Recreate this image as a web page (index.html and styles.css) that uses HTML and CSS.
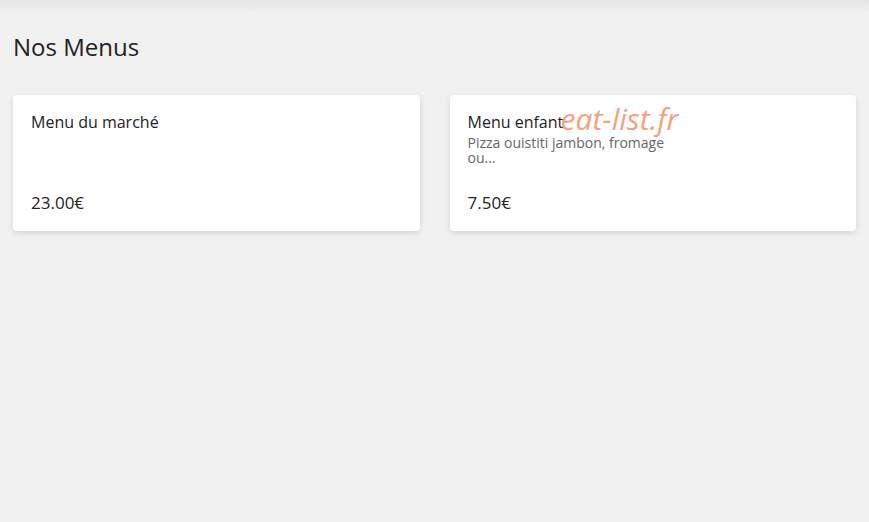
FILE: index.html
```html
<!DOCTYPE html>
<html lang="fr">
<head>
<meta charset="utf-8">
<title>Nos Menus</title>
<link rel="stylesheet" href="styles.css">
</head>
<body>
<div class="topbar"></div>
<main class="page">
  <h1 class="page-title">Nos Menus</h1>
  <section class="menu-grid">
    <article class="menu-card">
      <h2 class="menu-name">Menu du marché</h2>
      <div class="menu-price">23.00€</div>
    </article>
    <article class="menu-card">
      <h2 class="menu-name">Menu enfant</h2>
      <p class="menu-desc">Pizza ouistiti jambon, fromage ou...</p>
      <div class="menu-price">7.50€</div>
      <span class="brand-mark">eat-list.fr</span>
    </article>
  </section>
</main>
</body>
</html>
```

FILE: styles.css
```css
html, body {
  margin: 0;
  padding: 0;
}

body {
  background: #f1f1f1;
  font-family: "Open Sans", "Liberation Sans", sans-serif;
  color: #222;
  min-height: 522px;
}

.topbar {
  height: 12px;
  background: linear-gradient(to bottom, #e4e4e4, #f1f1f1);
}

.page {
  padding: 0 13px;
}

.page-title {
  margin: 19px 0 0;
  font-size: 24px;
  font-weight: 400;
  line-height: 32px;
  color: #222;
}

.menu-grid {
  display: grid;
  grid-template-columns: 1fr 1fr;
  gap: 30px;
  margin-top: 32px;
}

.menu-card {
  position: relative;
  background: #fff;
  border-radius: 4px;
  box-shadow: 0 2px 6px rgba(0, 0, 0, 0.12);
  height: 136px;
  box-sizing: border-box;
  padding: 15px 18px 16px;
  display: flex;
  flex-direction: column;
}

.menu-name {
  margin: 0;
  font-size: 16px;
  font-weight: 400;
  line-height: 24px;
  color: #222;
}

.menu-desc {
  margin: 1px 0 0;
  width: 210px;
  font-size: 14px;
  line-height: 15px;
  color: #666;
}

.menu-price {
  margin-top: auto;
  font-size: 17px;
  line-height: 24px;
  color: #222;
}

.brand-mark {
  position: absolute;
  left: 111px;
  top: 4px;
  font-size: 30px;
  font-style: italic;
  line-height: 40px;
  color: #f4a27c;
  pointer-events: none;
}
```
